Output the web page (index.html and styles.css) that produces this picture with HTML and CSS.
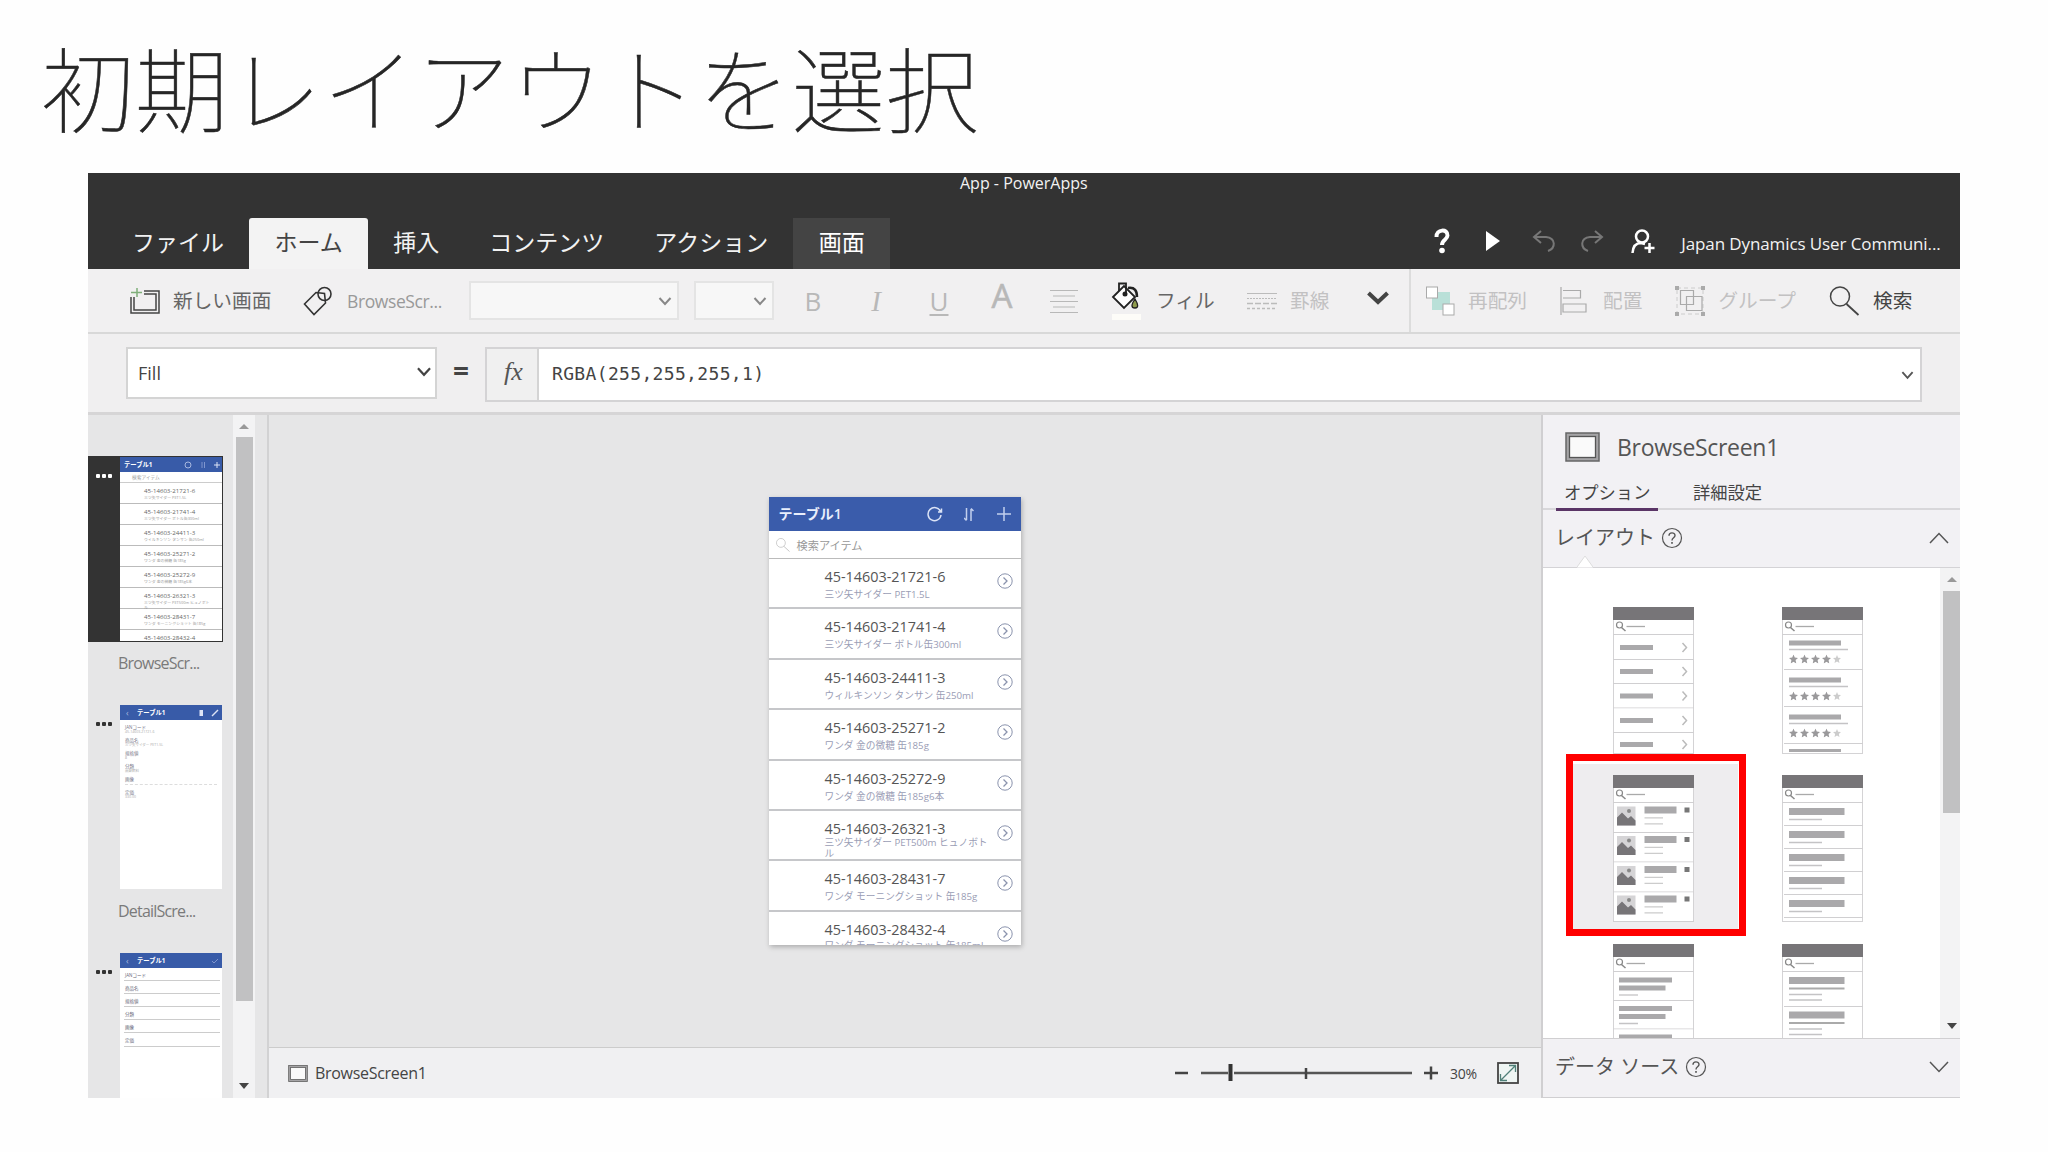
FILE: index.html
```html
<!DOCTYPE html>
<html lang="ja">
<head>
  <meta charset="UTF-8">
  <meta name="viewport" content="width=device-width, initial-scale=1.0">
  <title>初期レイアウトを選択</title>
  <link rel="stylesheet" href="styles.css">
</head>
<body>
  <!-- Shared shapes -->
  <svg width="0" height="0" class="defs">
    <symbol id="chevron" viewBox="0 0 14 10"><path d="M1.5 2 L7 8 L12.5 2" fill="none" stroke="currentColor" stroke-width="2"/></symbol>
    <symbol id="search" viewBox="0 0 30 30"><circle cx="10.500" cy="10.500" r="9.500" fill="none" stroke="currentColor" stroke-width="1.500"/><path d="M17 18 L29 29" stroke="currentColor" stroke-width="1.800"/></symbol>
    <symbol id="next" viewBox="0 0 16 16"><circle cx="8" cy="8" r="7.200" fill="none" stroke="#8a93ad"/><path d="M6.500 4.500 L10 8 L6.500 11.500" fill="none" stroke="#8a93ad" stroke-width="1.300"/></symbol>
    <symbol id="help" viewBox="0 0 22 22"><circle cx="11" cy="11" r="9.500" fill="none" stroke="#555" stroke-width="1.200"/><path d="M8 8.800 C8 4.800 14 5 14 8.500 C14 10.800 11 10.800 11 13.500" fill="none" stroke="#555" stroke-width="1.400"/><rect x="10.200" y="15" width="1.600" height="1.800" fill="#555"/></symbol>
    <symbol id="screen" viewBox="0 0 35 30"><rect x="1" y="1" width="33" height="28" fill="#a5a4a6" stroke="#666" stroke-width="1.500"/><rect x="4.500" y="4.500" width="26" height="21" fill="#fafafa" stroke="#555" stroke-width="1.300"/></symbol>

    <symbol id="frame" viewBox="0 0 81 147">
      <rect x=".5" y=".5" width="80" height="146" fill="#fff" stroke="#d4d3d5"/>
      <rect width="81" height="13" fill="#777578"/>
      <circle cx="6.500" cy="18" r="3" fill="none" stroke="#888" stroke-width="1.200"/>
      <path d="M8.500 20.500 L12.500 24" stroke="#888" stroke-width="1.500"/>
      <path d="M13.500 19.500 H32" stroke="#aaa" stroke-width="1.300"/>
      <path d="M0 27.500 H81" stroke="#d0cfd1"/>
    </symbol>
    <symbol id="row-simple" viewBox="0 0 81 25"><rect x="7" y="10" width="33" height="5" fill="#aaa9ab"/><path d="M69.500 8 L73.500 12.500 L69.500 17" fill="none" stroke="#bbb" stroke-width="1.500"/><path d="M0 24.500 H81" stroke="#d0cfd1"/></symbol>
    <symbol id="star" viewBox="0 0 10 10"><path d="M5 0 L6.400 3.400 L10 3.800 L7.300 6.200 L8.100 10 L5 8 L1.900 10 L2.700 6.200 L0 3.800 L3.600 3.400 Z"/></symbol>
    <symbol id="row-stars" viewBox="0 0 81 37">
      <rect x="7" y="6.500" width="52" height="5" fill="#aaa9ab"/><path d="M7 15.500 H66" stroke="#c4c3c5" stroke-width="1.300"/>
      <g fill="#9a999b"><use href="#star" x="7" y="20.500" width="9" height="9"/><use href="#star" x="18" y="20.500" width="9" height="9"/><use href="#star" x="29" y="20.500" width="9" height="9"/><use href="#star" x="40" y="20.500" width="9" height="9"/></g>
      <use href="#star" x="51" y="21" width="8" height="8" fill="#ccc"/>
      <path d="M2 35.500 H81" stroke="#d0cfd1"/>
    </symbol>
    <symbol id="row-image" viewBox="0 0 81 30">
      <rect x="4" y="3.500" width="18.500" height="19" fill="#d5d4d6"/>
      <path d="M4 22.500 V14.500 L9 9.500 L15 15.500 L18 13 L22.500 17.500 V22.500 Z" fill="#777578"/><circle cx="16" cy="8" r="2" fill="#888"/>
      <rect x="31.500" y="3.500" width="32" height="7" fill="#aaa9ab"/>
      <path d="M31.500 14.800 H50 M31.500 20.800 H50" stroke="#ccc" stroke-width="1.300"/>
      <rect x="71.500" y="4.500" width="5" height="5" fill="#777"/>
      <path d="M0 29.500 H81" stroke="#d0cfd1"/>
    </symbol>
    <symbol id="row-bar" viewBox="0 0 81 23"><rect x="7" y="5" width="55.500" height="7" fill="#aaa9ab"/><path d="M7 16.500 H40" stroke="#c4c3c5" stroke-width="1.300"/><path d="M2 22.500 H81" stroke="#d0cfd1"/></symbol>
    <symbol id="row-double" viewBox="0 0 81 29"><rect x="6" y="5.500" width="53" height="5" fill="#aaa9ab"/><rect x="6" y="13.500" width="46.500" height="5" fill="#aaa9ab"/><path d="M6 23 H25" stroke="#c4c3c5" stroke-width="1.300"/><path d="M0 28.500 H81" stroke="#d0cfd1"/></symbol>
    <symbol id="row-triple" viewBox="0 0 81 35"><rect x="7" y="5" width="55.500" height="7" fill="#aaa9ab"/><path d="M7 16.500 H62.500" stroke="#aaa" stroke-width="2.200"/><path d="M7 22.500 H40 M7 28 H40" stroke="#c4c3c5" stroke-width="1.300"/><path d="M2 34.500 H81" stroke="#d0cfd1"/></symbol>
  </svg>

  <h1 class="slide-title">初期レイアウトを選択</h1>

  <div class="app">
    <!-- Title bar and tabs -->
    <header class="header">
      <div class="app-title"><span>App - PowerApps</span></div>
      <nav class="tabs">
        <div class="tab">ファイル</div>
        <div class="tab active">ホーム</div>
        <div class="tab">挿入</div>
        <div class="tab">コンテンツ</div>
        <div class="tab">アクション</div>
        <div class="tab context">画面</div>
        <div class="account">
          <svg class="ic-help" width="16" height="26" viewBox="0 0 16 26"><path d="M2.500 9 C2 1 14 .5 13.500 7.500 C13.300 12 8 11.500 8 17" fill="none" stroke="#fff" stroke-width="4"/><circle cx="8" cy="22.500" r="2.800" fill="#fff"/></svg>
          <svg width="14" height="20" viewBox="0 0 14 20"><path d="M0 0 L14 10 L0 20 Z" fill="#fff"/></svg>
          <svg class="undo" width="24" height="24" viewBox="0 0 24 24"><path d="M9 2 L2 8 L9 14 M2 8 H14 C24 9 24 19 16 22" fill="none" stroke="#777" stroke-width="2"/></svg>
          <svg class="redo" width="24" height="24" viewBox="0 0 24 24"><path d="M15 2 L22 8 L15 14 M22 8 H10 C0 9 0 19 8 22" fill="none" stroke="#777" stroke-width="2"/></svg>
          <svg width="24" height="25" viewBox="0 0 24 25"><circle cx="11" cy="7.500" r="6" fill="none" stroke="#fff" stroke-width="2.500"/><path d="M1.500 24 C2 17 5 14 10 14 L14 15 M18.500 14 V24 M13.500 19 H23.500" fill="none" stroke="#fff" stroke-width="2.500"/></svg>
          <span class="account-name">Japan Dynamics User Communi...</span>
        </div>
      </nav>
    </header>

    <!-- Ribbon -->
    <div class="toolbar">
      <div class="tool new-screen">
        <svg width="30" height="26" viewBox="0 0 30 26"><path d="M14 3 H29 V25 H1 V9" fill="none" stroke="#444" stroke-width="1.500"/><path d="M14 6 H26 V22 H4 V9" fill="none" stroke="#444" stroke-width="1.500"/><path d="M7 0 V9 M1 4.500 H12" stroke="#7fae7a" stroke-width="1.500"/></svg>
        <span>新しい画面</span>
      </div>
      <div class="tool rename">
        <svg width="32" height="30" viewBox="0 0 32 30"><path d="M1.500 18 L13 6.500 L21.500 7.500 L22.500 17 L11 28.500 Z" fill="none" stroke="#333" stroke-width="1.600"/><circle cx="21.500" cy="8" r="6.500" fill="none" stroke="#333" stroke-width="1.600"/></svg>
        <span>BrowseScr...</span>
      </div>
      <div class="select font-name"><svg width="14" height="10"><use href="#chevron"/></svg></div>
      <div class="select font-size"><svg width="14" height="10"><use href="#chevron"/></svg></div>
      <div class="format">
        <span>B</span>
        <span class="italic">I</span>
        <span class="underline">U</span>
        <span class="font-color">A</span>
      </div>
      <svg class="align" width="28" height="24" viewBox="0 0 28 24"><path d="M0 1.500 H28 M3 7 H25 M0 12.500 H28 M3 18 H25 M0 23.500 H28" stroke="#b8b8b8" stroke-width="1.200"/></svg>
      <div class="tool fill">
        <svg width="32" height="38" viewBox="0 0 32 38"><path d="M2 15 L13 4 L24 15 L13 26 Z" fill="#fff" stroke="#222" stroke-width="1.800"/><path d="M8 9 V1.500 H15 V13" fill="none" stroke="#222" stroke-width="1.800"/><circle cx="14" cy="12" r="2.500" fill="#222"/><path d="M17 6 C24 5 26 9 26 15" fill="none" stroke="#222" stroke-width="2.500"/><path d="M24 17 C20 23 20 26 24 26 C28 26 27 22 24 17 Z" fill="#8f9b4c" stroke="#222" stroke-width="1.300"/><rect x="1" y="32" width="29" height="6" fill="#fdfcf8"/></svg>
        <span>フィル</span>
      </div>
      <div class="tool border disabled">
        <svg width="30" height="18" viewBox="0 0 30 18"><path d="M0 1.500 H30" stroke="#bbb"/><path d="M0 6.500 H30" stroke="#bbb" stroke-dasharray="2 1"/><path d="M0 11.500 H30" stroke="#bbb" stroke-dasharray="6 2" stroke-width="1.500"/><path d="M0 16.500 H30" stroke="#bbb" stroke-dasharray="3 2" stroke-width="1.500"/></svg>
        <span>罫線</span>
      </div>
      <svg class="more" width="22" height="14" viewBox="0 0 22 14"><path d="M1.500 2 L11 11 L20.500 2" fill="none" stroke="#444" stroke-width="4"/></svg>
      <div class="tools-right">
        <div class="tool disabled">
          <svg width="29" height="30" viewBox="0 0 29 30"><rect x="6" y="6" width="18" height="18" fill="#b9e0d8"/><rect x=".5" y="1" width="11" height="11" fill="#fff" stroke="#aaa"/><rect x="17" y="18" width="11" height="11" fill="#fff" stroke="#aaa"/></svg>
          <span>再配列</span>
        </div>
        <div class="tool disabled arrange">
          <svg width="28" height="28" viewBox="0 0 28 28"><path d="M1 0 V28 M3 3.500 H20.500 V11 H3 M3 17 H26 V25 H3 Z" fill="none" stroke="#aaa" stroke-width="1.200"/></svg>
          <span>配置</span>
        </div>
        <div class="tool disabled">
          <svg width="30" height="30" viewBox="0 0 30 30"><path d="M2 2 H28 V28 H2 Z" fill="none" stroke="#ccc" stroke-dasharray="4 3"/><path d="M5.500 4.500 H18.500 V18.500 H5.500 Z M11.500 10.500 H27 V24.500 H11.500 Z" fill="none" stroke="#aaa" stroke-width="1.200"/><path d="M0 0 H4 V4 H0 Z M26 0 H30 V4 H26 Z M0 26 H4 V30 H0 Z M26 26 H30 V30 H26 Z" fill="#aaa"/></svg>
          <span>グループ</span>
        </div>
        <div class="tool find">
          <svg width="31" height="30"><use href="#search"/></svg>
          <span>検索</span>
        </div>
      </div>
    </div>

    <!-- Formula bar -->
    <div class="formula-bar">
      <div class="property"><span>Fill</span><svg width="16" height="11"><use href="#chevron"/></svg></div>
      <div class="equals">=</div>
      <div class="formula">
        <div class="fx">fx</div>
        <div class="expression">RGBA(255,255,255,1)</div>
        <svg width="13" height="10"><use href="#chevron"/></svg>
      </div>
    </div>

    <div class="workspace">
      <!-- Screen list -->
      <aside class="screens">
        <div class="screen-list">
          <div class="screen-item selected">
            <div class="dots"><i></i><i></i><i></i></div>
            <div class="thumb">
              <div class="thumb-head"><b>テーブル1</b><svg width="36" height="8" viewBox="0 0 36 8"><circle cx="4" cy="4" r="3" fill="none" stroke="#a7b7df"/><path d="M18 1 V7 M20.500 1 V7" stroke="#7f95cd"/><path d="M30 4 H36 M33 1 V7" stroke="#dde4f5"/></svg></div>
              <div class="thumb-search">検索アイテム</div>
              <div class="thumb-row"><p>45-14603-21721-6</p><small>三ツ矢サイダー PET1.5L</small></div>
              <div class="thumb-row"><p>45-14603-21741-4</p><small>三ツ矢サイダー ボトル缶300ml</small></div>
              <div class="thumb-row"><p>45-14603-24411-3</p><small>ウィルキンソン タンサン 缶250ml</small></div>
              <div class="thumb-row"><p>45-14603-25271-2</p><small>ワンダ 金の微糖 缶185g</small></div>
              <div class="thumb-row"><p>45-14603-25272-9</p><small>ワンダ 金の微糖 缶185g6本</small></div>
              <div class="thumb-row"><p>45-14603-26321-3</p><small>三ツ矢サイダー PET500m ヒュノボト<br>ル</small></div>
              <div class="thumb-row"><p>45-14603-28431-7</p><small>ワンダ モーニングショット 缶185g</small></div>
              <div class="thumb-row"><p>45-14603-28432-4</p></div>
            </div>
          </div>
          <div class="screen-name">BrowseScr...</div>

          <div class="screen-item">
            <div class="dots"><i></i><i></i><i></i></div>
            <div class="thumb">
              <div class="thumb-head back"><b>テーブル1</b><svg width="22" height="8" viewBox="0 0 22 8"><rect x="1.500" y="1" width="3.500" height="6" fill="#dde4f5"/><path d="M14 7 L20 1" stroke="#dde4f5" stroke-width="1.500"/></svg></div>
              <div class="detail-row"><p>JANコード</p><small>45-14603-21721-6</small></div>
              <div class="detail-row"><p>商品名</p><small>三ツ矢サイダー PET1.5L</small></div>
              <div class="detail-row"><p>規格値</p><small>8</small></div>
              <div class="detail-row"><p>分類</p><small>炭酸飲料</small></div>
              <div class="detail-row"><p>画像</p><small class="line"></small></div>
              <div class="detail-row"><p>定価</p><small>330.00</small></div>
            </div>
          </div>
          <div class="screen-name">DetailScre...</div>

          <div class="screen-item">
            <div class="dots"><i></i><i></i><i></i></div>
            <div class="thumb">
              <div class="thumb-head back"><b>テーブル1</b><svg width="22" height="8" viewBox="0 0 22 8"><path d="M14 4 L16 6 L20 2" fill="none" stroke="#7f95cd"/></svg></div>
              <div class="edit-row">JANコード</div>
              <div class="edit-row">商品名</div>
              <div class="edit-row">規格値</div>
              <div class="edit-row">分類</div>
              <div class="edit-row">画像</div>
              <div class="edit-row">定価</div>
            </div>
          </div>
        </div>
        <div class="scrollbar">
          <span class="arrow up"></span>
          <span class="thumb-bar"></span>
          <span class="arrow down"></span>
        </div>
      </aside>

      <!-- Canvas -->
      <main class="canvas">
        <div class="stage">
          <div class="phone">
            <div class="phone-head">
              <b>テーブル1</b>
              <svg width="17" height="17" viewBox="0 0 17 17"><path d="M14.500 5.500 A6.500 6.500 0 1 0 15 9 M15.500 2.500 V6 H12" fill="none" stroke="#dbe3f6" stroke-width="1.500"/></svg>
              <svg width="10" height="15" viewBox="0 0 10 15"><path d="M2.500 1 V13 M0 11 L2.500 13.500 M7 14 V2 M9.500 4 L7 1.500" fill="none" stroke="#c2cfee" stroke-width="1.500"/></svg>
              <svg width="14" height="14" viewBox="0 0 14 14"><path d="M7 0 V14 M0 7 H14" stroke="#c2cfee" stroke-width="1.500"/></svg>
            </div>
            <div class="phone-search"><svg width="14" height="14"><use href="#search"/></svg><span>検索アイテム</span></div>
            <div class="item"><div><p>45-14603-21721-6</p><small>三ツ矢サイダー PET1.5L</small></div><svg width="16" height="16"><use href="#next"/></svg></div>
            <div class="item"><div><p>45-14603-21741-4</p><small>三ツ矢サイダー ボトル缶300ml</small></div><svg width="16" height="16"><use href="#next"/></svg></div>
            <div class="item"><div><p>45-14603-24411-3</p><small>ウィルキンソン タンサン 缶250ml</small></div><svg width="16" height="16"><use href="#next"/></svg></div>
            <div class="item"><div><p>45-14603-25271-2</p><small>ワンダ 金の微糖 缶185g</small></div><svg width="16" height="16"><use href="#next"/></svg></div>
            <div class="item"><div><p>45-14603-25272-9</p><small>ワンダ 金の微糖 缶185g6本</small></div><svg width="16" height="16"><use href="#next"/></svg></div>
            <div class="item two-line"><div><p>45-14603-26321-3</p><small>三ツ矢サイダー PET500m ヒュノボト<br>ル</small></div><svg width="16" height="16"><use href="#next"/></svg></div>
            <div class="item"><div><p>45-14603-28431-7</p><small>ワンダ モーニングショット 缶185g</small></div><svg width="16" height="16"><use href="#next"/></svg></div>
            <div class="item last"><div><p>45-14603-28432-4</p><small>ワンダ モーニングショット 缶185ml</small></div><svg width="16" height="16"><use href="#next"/></svg></div>
          </div>
        </div>
        <footer class="status">
          <svg width="20" height="17"><use href="#screen"/></svg>
          <span class="status-name">BrowseScreen1</span>
          <svg class="slider" width="264" height="20" viewBox="0 0 264 20"><path d="M0 10 H13 M249 10 H263 M256 3.500 V16.500" stroke="#444" stroke-width="2.500"/><path d="M26 10 H53 M59 10 H237" stroke="#555" stroke-width="2.500"/><path d="M131 5 V16" stroke="#444" stroke-width="2.500"/><path d="M55.500 1 V18" stroke="#333" stroke-width="4"/></svg>
          <span class="zoom">30%</span>
          <svg width="22" height="22" viewBox="0 0 22 22"><rect x="1" y="1" width="20" height="20" fill="#eef5f3" stroke="#444" stroke-width="1.800"/><path d="M4 18 L18 4 M12 3.500 H18.500 V10 M3.500 12 V18.500 H10" fill="none" stroke="#4f8078" stroke-width="1.300"/></svg>
        </footer>
      </main>

      <!-- Options panel -->
      <aside class="panel">
        <div class="panel-title"><svg width="35" height="30"><use href="#screen"/></svg><span>BrowseScreen1</span></div>
        <div class="panel-tabs"><span class="current">オプション</span><span>詳細設定</span></div>
        <div class="section layout-head">
          <span>レイアウト</span><svg width="22" height="22"><use href="#help"/></svg>
          <svg class="fold" width="20" height="12" viewBox="0 0 20 12"><path d="M1 11 L10 1.500 L19 11" fill="none" stroke="#555" stroke-width="1.500"/></svg>
          <svg class="notch" width="16" height="13" viewBox="0 0 16 13"><path d="M0 12.500 L8 1 L16 12.500 Z" fill="#fff"/><path d="M0 12 L8 1 L16 12" fill="none" stroke="#ddd"/></svg>
        </div>
        <div class="layouts">
          <div class="layout-grid">
            <div class="layout"><svg width="81" height="147" viewBox="0 0 81 147"><use href="#frame" width="81" height="147"/><use href="#row-simple" y="28" width="81" height="25"/><use href="#row-simple" y="52" width="81" height="25"/><use href="#row-simple" y="76.500" width="81" height="25"/><use href="#row-simple" y="101" width="81" height="25"/><use href="#row-simple" y="125" width="81" height="25"/></svg></div>
            <div class="layout"><svg width="81" height="147" viewBox="0 0 81 147"><use href="#frame" width="81" height="147"/><use href="#row-stars" y="27" width="81" height="37"/><use href="#row-stars" y="64" width="81" height="37"/><use href="#row-stars" y="101" width="81" height="37"/><rect x="7" y="142" width="52" height="3" fill="#aaa9ab"/></svg></div>
            <div class="layout chosen"><svg width="81" height="147" viewBox="0 0 81 147"><use href="#frame" width="81" height="147"/><use href="#row-image" y="28" width="81" height="30"/><use href="#row-image" y="57.500" width="81" height="30"/><use href="#row-image" y="87.500" width="81" height="30"/><use href="#row-image" y="117" width="81" height="30"/></svg></div>
            <div class="layout"><svg width="81" height="147" viewBox="0 0 81 147"><use href="#frame" width="81" height="147"/><use href="#row-bar" y="28" width="81" height="23"/><use href="#row-bar" y="51" width="81" height="23"/><use href="#row-bar" y="74" width="81" height="23"/><use href="#row-bar" y="97" width="81" height="23"/><use href="#row-bar" y="120" width="81" height="23"/></svg></div>
            <div class="layout"><svg width="81" height="147" viewBox="0 0 81 147"><use href="#frame" width="81" height="147"/><use href="#row-double" y="28" width="81" height="29"/><use href="#row-double" y="56.500" width="81" height="29"/><use href="#row-double" y="85" width="81" height="29"/></svg></div>
            <div class="layout"><svg width="81" height="147" viewBox="0 0 81 147"><use href="#frame" width="81" height="147"/><use href="#row-triple" y="28" width="81" height="35"/><use href="#row-triple" y="62.500" width="81" height="35"/></svg></div>
          </div>
          <div class="scrollbar">
            <span class="arrow up"></span>
            <span class="thumb-bar"></span>
            <span class="arrow down"></span>
          </div>
          <div class="highlight"></div>
        </div>
        <div class="section data-source">
          <span>データ ソース</span><svg width="22" height="22"><use href="#help"/></svg>
          <svg class="fold" width="20" height="12" viewBox="0 0 20 12"><path d="M1 1 L10 10.500 L19 1" fill="none" stroke="#555" stroke-width="1.500"/></svg>
        </div>
      </aside>
    </div>
  </div>
</body>
</html>
```

FILE: styles.css
```css
/* General */
* {
  box-sizing: border-box;
}

body {
  margin: 0;
  width: 2048px;
  height: 1152px;
  overflow: hidden;
  background: #fefefe;
  color: #444;
  font-family: "Open Sans", "Noto Sans CJK JP", sans-serif;
}

p {
  margin: 0;
}

svg {
  display: block;
  flex: none;
}

.defs {
  position: absolute;
}

span,
b {
  white-space: nowrap;
}

.slide-title {
  height: 173px;
  margin: 0;
  padding: 18px 0 0 41px;
  font-family: "Noto Sans CJK JP", sans-serif;
  font-size: 93.500px;
  font-weight: 100;
  line-height: 136px;
  letter-spacing: 0.300px;
  color: #262626;
  -webkit-text-stroke: 0.5px #262626;
}

.app {
  display: flex;
  flex-direction: column;
  width: 1872px;
  height: 925px;
  margin-left: 88px;
  background: #f1f0f1;
}

/* Header */
.header {
  height: 96px;
  background: #333;
  color: #f2f2f2;
}

.app-title {
  height: 45px;
  padding-left: 872px;
  font-size: 16px;
  line-height: 20px;
}

.tabs {
  display: flex;
  height: 51px;
  padding-left: 19px;
}

.tab {
  padding: 0 25px;
  font-size: 23px;
  line-height: 49px;
  white-space: nowrap;
}

.tab.active {
  background: #f3f3f3;
  color: #444;
  border-radius: 3px 3px 0 0;
}

.tab.context {
  background: #444;
  color: #fff;
}

.tab.active,
.tab.context {
  padding: 0 25.500px;
}

.account {
  display: flex;
  align-items: center;
  height: 46px;
  margin-left: 544px;
}

.account svg {
  margin-right: 26px;
}

.account .ic-help {
  margin-right: 36px;
}

.account svg:nth-child(2) {
  margin-right: 32px;
}

.account .undo {
  margin-right: 24px;
}

.account .redo {
  margin-right: 27px;
}

.account-name {
  padding-top: 4px;
  font-size: 17px;
  letter-spacing: -0.100px;
}

/* Toolbar */
.toolbar {
  display: flex;
  align-items: center;
  height: 65px;
  border-bottom: 2px solid #d8d8d8;
}

.tool {
  display: flex;
  align-items: center;
  gap: 13px;
  font-size: 19.700px;
  color: #666;
}

.tool span {
  padding-top: 1px;
  line-height: 28px;
}

.new-screen {
  width: 141px;
  margin-left: 42px;
}

.rename {
  gap: 12px;
  width: 140px;
  margin-left: 32px;
  color: #999;
}

.rename span {
  font-size: 17.500px;
  letter-spacing: -0.400px;
}

.disabled {
  color: #c2c1c2;
}

.select {
  display: flex;
  align-items: center;
  justify-content: flex-end;
  height: 39px;
  padding-right: 5px;
  border: 2px solid #e4e4e4;
  background: #f7f7f7;
  color: #888;
}

.font-name {
  width: 210px;
  margin-left: 26px;
}

.font-size {
  width: 80px;
  margin-left: 15px;
}

.format {
  display: flex;
  gap: 39px;
  margin-left: 27px;
  font-size: 26px;
  line-height: 36px;
  color: #b8b8b8;
}

.format span {
  width: 24px;
  text-align: center;
}

.format .italic {
  font-family: "Liberation Serif", serif;
  font-style: italic;
  font-size: 29px;
}

.format .underline {
  text-decoration: underline;
  text-decoration-thickness: 2px;
  text-underline-offset: 3px;
}

.format .font-color {
  margin-top: -5px;
  font-size: 33px;
  -webkit-text-stroke: 0.6px #b8b8b8;
}

.align {
  margin-left: 36px;
}

.fill {
  width: 105px;
  margin-left: 33px;
}

.border {
  width: 83px;
  margin-left: 31px;
}

.more {
  margin: -6px 20px 0 37px;
}

.tools-right {
  display: flex;
  align-items: center;
  gap: 33px;
  height: 63px;
  padding-left: 15px;
  border-left: 2px solid #dcdcdc;
}

.arrange {
  gap: 15px;
}

.find {
  color: #444;
}

/* Formula bar */
.formula-bar {
  display: flex;
  height: 81px;
  padding: 13px 0 0 38px;
  border-bottom: 3px solid #d6d5d6;
  background: #f0eff0;
}

.property {
  display: flex;
  align-items: center;
  justify-content: space-between;
  width: 311px;
  height: 52px;
  padding: 0 3px 4px 10px;
  border: 2px solid #d4d4d4;
  background: #fff;
  font-size: 18px;
}

.property span {
  padding-top: 4px;
}

.equals {
  width: 48px;
  text-align: center;
  font-size: 28px;
  font-weight: 700;
  line-height: 46px;
}

.formula {
  display: flex;
  align-items: center;
  width: 1437px;
  height: 55px;
  padding-right: 6px;
  border: 2px solid #d4d3d5;
  background: #fff;
  color: #555;
}

.fx {
  width: 52px;
  height: 51px;
  padding-left: 3px;
  border-right: 2px solid #d4d4d4;
  background: #f0f0f0;
  font-family: "Liberation Serif", serif;
  font-style: italic;
  font-size: 26px;
  line-height: 46px;
  text-align: center;
}

.expression {
  flex: 1;
  padding: 0 0 2px 13px;
  font-family: "DejaVu Sans Mono", monospace;
  font-size: 18px;
  letter-spacing: 0.340px;
  color: #444;
}

/* Workspace */
.workspace {
  display: flex;
  flex: 1;
  min-height: 0;
}

.screens {
  display: flex;
  justify-content: space-between;
  width: 181px;
  padding-right: 12px;
  border-right: 2px solid #d2d2d3;
  background: #e6e6e7;
}

.screen-list {
  width: 135px;
  height: 683px;
  padding-top: 41px;
  overflow: hidden;
}

.screen-item {
  display: flex;
  height: 186px;
  padding: 1px 1px 1px 0;
}

.screen-item.selected {
  background: #333;
}

.dots {
  display: flex;
  gap: 2px;
  width: 32px;
  padding: 17px 0 0 8px;
}

.dots i {
  width: 4px;
  height: 4px;
  border-radius: 1px;
  background: #333;
}

.selected .dots i {
  background: #fff;
}

.thumb {
  width: 102px;
  height: 184px;
  overflow: hidden;
  background: #fff;
}

.thumb-head {
  display: flex;
  align-items: center;
  justify-content: space-between;
  height: 15px;
  padding: 0 2px 0 4px;
  background: #385ba8;
  color: #fff;
  font-size: 6.300px;
}

.thumb-head.back::before {
  content: "‹";
  width: 11px;
  padding-left: 2px;
  font-size: 9px;
  line-height: 9px;
  color: #a7b7df;
}

.thumb-head.back b {
  flex: 1;
}

.thumb-search {
  height: 11px;
  padding-left: 12px;
  border-bottom: 1px solid #ccc;
  color: #999;
  font-size: 4.700px;
  line-height: 11px;
}

.thumb-row {
  height: 21px;
  padding: 3px 0 0 24px;
  border-bottom: 1px solid #bbb;
  white-space: nowrap;
}

.thumb-row p {
  height: 10px;
  font-size: 6.100px;
  line-height: 10px;
  color: #666;
}

.thumb-row small {
  display: block;
  font-size: 3.900px;
  line-height: 4.500px;
  color: #999;
}

.detail-row {
  height: 13.100px;
  padding: 4px 5px 0;
  font-size: 4.500px;
  line-height: 6px;
  color: #778;
}

.detail-row small {
  display: block;
  font-size: 3.500px;
  line-height: 4px;
  color: #aaa;
}

.detail-row .line {
  height: 3px;
  border-bottom: 1px dashed #ddd;
}

.edit-row {
  height: 13.100px;
  margin: 0 2px 0 4px;
  padding: 3px 0 0 1px;
  border-bottom: 1px solid #ccc;
  font-size: 4.500px;
  line-height: 8px;
  color: #667;
}

.screen-name {
  height: 62px;
  padding-left: 30px;
  font-size: 16px;
  line-height: 42px;
  letter-spacing: -0.800px;
  color: #7a7a7a;
}

/* Scrollbars */
.scrollbar {
  display: flex;
  flex-direction: column;
  align-items: center;
  width: 22px;
  background: #f3f3f4;
}

.arrow {
  border: 5px solid transparent;
}

.arrow.up {
  margin-top: 5px;
  border-top: 0;
  border-bottom-color: #999;
}

.arrow.down {
  margin: auto 0 9px;
  border-bottom: 0;
  border-top: 6px solid #444;
}

.screens .scrollbar .arrow.up {
  margin-top: 9px;
}

.thumb-bar {
  width: 17px;
  height: 564px;
  margin-top: 8px;
  background: #c1c1c2;
}

/* Canvas */
.canvas {
  display: flex;
  flex-direction: column;
  width: 1272px;
}

.stage {
  flex: 1;
  padding: 82px 0 0 499.500px;
  background: #e6e6e7;
}

.phone {
  width: 252px;
  height: 448px;
  overflow: hidden;
  background: #fff;
  box-shadow: 1px 2px 5px rgba(0, 0, 0, 0.25);
}

.phone-head {
  display: flex;
  align-items: center;
  height: 34px;
  padding: 0 10px;
  background: #3a5cab;
  color: #e8eefc;
  font-size: 14px;
}

.phone-head b {
  flex: 1;
  padding-bottom: 2px;
  font-weight: 600;
}

.phone-head svg {
  margin-left: 22px;
}

.phone-head svg + svg {
  margin-left: 21px;
}

.phone-head svg + svg + svg {
  margin-left: 23px;
}

.phone-search {
  display: flex;
  align-items: center;
  gap: 7px;
  height: 28px;
  padding-left: 7px;
  border-bottom: 1px solid #bbb;
  color: #999;
  font-size: 11.200px;
}

.phone-search svg {
  color: #bbb;
}

.item {
  display: flex;
  justify-content: space-between;
  height: 50.400px;
  padding: 8px 8px 0 56px;
  border-bottom: 2px solid #c6c7ca;
}

.item p {
  height: 20px;
  font-size: 14.400px;
  line-height: 20px;
  color: #555;
}

.item small {
  display: block;
  font-size: 9.700px;
  line-height: 16px;
  color: #9a9db5;
  white-space: nowrap;
}

.item svg {
  margin-top: 6px;
}

.two-line small {
  margin-top: -2px;
  line-height: 11px;
}

.last small {
  line-height: 11px;
}

.status {
  display: flex;
  align-items: center;
  height: 51px;
  padding-left: 19px;
  border-top: 1px solid #ccc;
  background: #f0f0f2;
}

.status-name {
  width: 867px;
  padding-left: 7px;
  font-size: 16px;
  letter-spacing: -0.300px;
}

.zoom {
  width: 58px;
  padding-left: 11px;
  font-size: 14px;
  letter-spacing: -0.300px;
}

/* Options panel */
.panel {
  display: flex;
  flex-direction: column;
  width: 419px;
  border-left: 2px solid #d0cfd1;
  border-bottom: 1px solid #d0cfd1;
  background: #f2f1f4;
}

.panel-title {
  display: flex;
  align-items: center;
  gap: 17px;
  height: 63px;
  padding-left: 22px;
  font-size: 23px;
  letter-spacing: -0.300px;
  color: #555;
}

.panel-tabs {
  display: flex;
  height: 32px;
  padding-left: 13px;
  border-bottom: 2px solid #d8d7da;
  font-size: 17.300px;
  line-height: 29px;
}

.panel-tabs span {
  height: 33px;
  margin-left: 28px;
  padding-left: 7px;
}

.panel-tabs .current {
  width: 102px;
  margin-left: 0;
  padding-left: 8px;
  border-bottom: 3px solid #5a3566;
}

.section {
  display: flex;
  align-items: center;
  padding: 0 11px 0 12px;
  font-size: 20px;
  color: #555;
}

.section span {
  padding-bottom: 3px;
}

.section .fold {
  margin-left: auto;
}

.section svg {
  margin-left: 6px;
}

.layout-head {
  position: relative;
  height: 58px;
  padding-bottom: 1px;
  border-bottom: 1px solid #d4d3d6;
}

.layout-head .notch {
  position: absolute;
  left: 28px;
  bottom: -1px;
}

.layouts {
  position: relative;
  display: flex;
  justify-content: space-between;
  height: 470px;
  background: #fff;
}

.layout-grid {
  display: grid;
  grid-template-columns: 169px 169px;
  grid-auto-rows: 168.500px;
  height: 470px;
  padding: 27.500px 0 0 26px;
  overflow: hidden;
}

.layout {
  padding: 11px 0 0 44px;
}

.layout.chosen {
  background: #eeedef;
}

.layouts .scrollbar {
  width: 20px;
  padding-left: 3px;
}

.layouts .thumb-bar {
  height: 222px;
  margin-top: 9px;
}

.layouts .arrow.up {
  margin-top: 9px;
}

/* Red frame around the chosen layout */
.highlight {
  position: absolute;
  left: 23px;
  top: 186px;
  width: 180px;
  height: 182px;
  border: 7px solid #f00;
}

.data-source {
  flex: 1;
  padding-bottom: 3px;
  border-top: 1px solid #d0cfd1;
}
```
